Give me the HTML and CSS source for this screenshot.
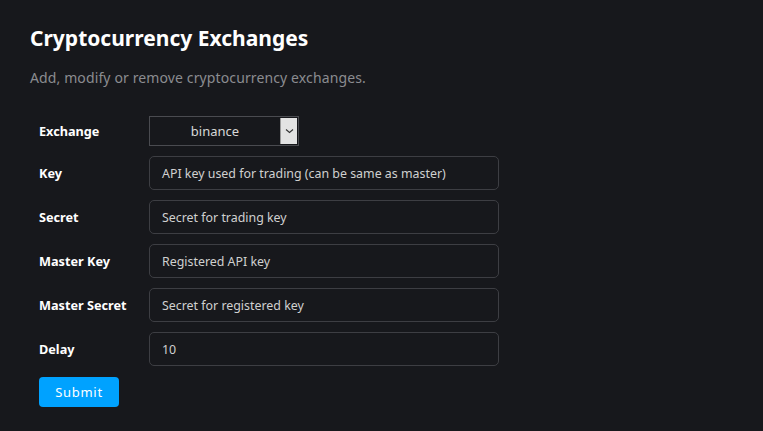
FILE: index.html
```html
<!DOCTYPE html>
<html>
<head>
<meta charset="utf-8">
<link rel="stylesheet" href="styles.css">
</head>
<body>
<div class="page">
  <h1 class="title">Cryptocurrency Exchanges</h1>
  <p class="subtitle">Add, modify or remove cryptocurrency exchanges.</p>
  <form class="form">
    <div class="row">
      <label class="label">Exchange</label>
      <div class="select">
        <span class="select-value">binance</span>
        <span class="select-arrow"><svg width="9" height="6" viewBox="0 0 9 6"><path d="M1 1.5 L4.5 4.5 L8 1.5" fill="none" stroke="#333" stroke-width="1.1"/></svg></span>
      </div>
    </div>
    <div class="row">
      <label class="label">Key</label>
      <div class="input">API key used for trading (can be same as master)</div>
    </div>
    <div class="row">
      <label class="label">Secret</label>
      <div class="input">Secret for trading key</div>
    </div>
    <div class="row">
      <label class="label">Master Key</label>
      <div class="input">Registered API key</div>
    </div>
    <div class="row">
      <label class="label">Master Secret</label>
      <div class="input">Secret for registered key</div>
    </div>
    <div class="row">
      <label class="label">Delay</label>
      <div class="input">10</div>
    </div>
    <div class="actions">
      <button type="button" class="submit">Submit</button>
    </div>
  </form>
</div>
</body>
</html>
```
FILE: styles.css
```css
html, body {
  margin: 0;
  padding: 0;
  background: #17181c;
  font-family: "Noto Sans", "Open Sans", sans-serif;
}
.page {
  padding: 22px 30px;
}
.title {
  margin: 0;
  color: #ffffff;
  font-size: 21px;
  font-weight: 700;
  letter-spacing: 0;
  line-height: 32px;
}
.subtitle {
  margin: 14px 0 0 0;
  color: #8b8c90;
  font-size: 14px;
  line-height: 20px;
  letter-spacing: 0.12px;
}
.form {
  margin: 28px 0 0 9px;
  display: flex;
  flex-direction: column;
  gap: 10px;
}
.row {
  display: flex;
  align-items: center;
}
.label {
  width: 110px;
  color: #ffffff;
  font-size: 12.7px;
  font-weight: 700;
}
.select {
  width: 150px;
  height: 30px;
  box-sizing: border-box;
  border: 1px solid #4a4b50;
  display: flex;
  align-items: stretch;
  background: #17181c;
}
.select-value {
  flex: 1;
  display: flex;
  align-items: center;
  justify-content: center;
  color: #d8d8d8;
  font-size: 13px;
}
.select-arrow {
  width: 16px;
  margin: 1px 1px 1px 0;
  background: #e3e3e3;
  border-left: 1px solid #9a9a9a;
  display: flex;
  align-items: center;
  justify-content: center;
}
.input {
  width: 350px;
  height: 34px;
  box-sizing: border-box;
  border: 1px solid #3d3e43;
  border-radius: 5px;
  padding: 0 12px;
  display: flex;
  align-items: center;
  color: #d0d0d0;
  font-size: 12.4px;
}
.actions {
  padding-top: 1px;
}
.submit {
  width: 80px;
  height: 30px;
  border: none;
  border-radius: 4px;
  background: #00a2ff;
  color: #ffffff;
  font-family: "Noto Sans", "Open Sans", sans-serif;
  font-size: 13px;
  letter-spacing: 0.7px;
  padding: 0;
}
```
